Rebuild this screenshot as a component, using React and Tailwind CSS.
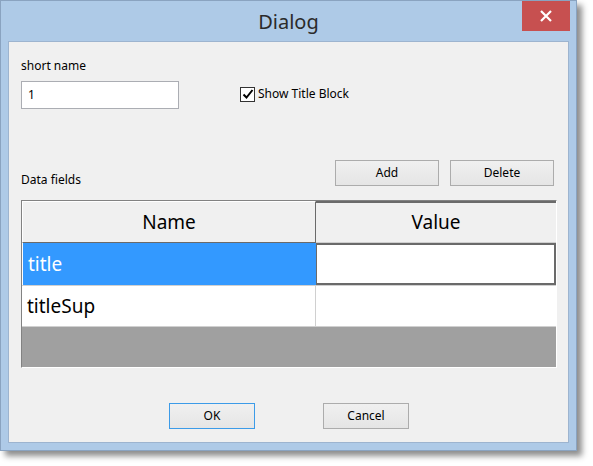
export default function App() {
  const f = { fontFamily: '"Noto Sans", "Open Sans", sans-serif' };
  return (
    <div className="w-[593px] h-[466px] bg-white" style={f}>
      <div className="w-[577px] h-[451px] bg-[#aecae7] border border-[#8aa3c0] flex flex-col shadow-[5px_5px_6px_rgba(0,0,0,0.45)]">
        <div className="h-[40px] flex relative">
          <div className="flex-1 flex items-center justify-center text-[20px] text-[#2b2b2b] pt-[2px]">Dialog</div>
          <div className="absolute right-[6px] top-0 w-[48px] h-[30px] bg-[#c75050] flex items-center justify-center">
            <svg width="14" height="14" viewBox="0 0 14 14"><path d="M2 2L12 12M12 2L2 12" stroke="white" strokeWidth="2.2" /></svg>
          </div>
        </div>
        <div className="mx-[7px] mb-[7px] flex-1 bg-[#f0f0f0] border border-[#9db4cf] flex flex-col px-[12px] text-[12px] text-black">
          <div className="mt-[15px] h-[16px]">short name</div>
          <div className="flex items-center mt-[8px]">
            <div className="w-[158px] h-[28px] bg-white border border-[#abadb3] pl-[6px] flex items-center">1</div>
            <div className="ml-[61px] flex items-center gap-[3px] -mt-[2px]">
              <div className="w-[15px] h-[15px] border border-[#333] bg-white flex items-center justify-center">
                <svg width="12" height="12" viewBox="0 0 12 12"><path d="M1.5 6.5L4.5 9.5L10.5 2" stroke="black" strokeWidth="2" fill="none" /></svg>
              </div>
              <span>Show Title Block</span>
            </div>
          </div>
          <div className="flex items-end mt-[51px]">
            <div className="flex-1 mb-[-3px]">Data fields</div>
            <div className="w-[104px] h-[26px] border border-[#acacac] bg-gradient-to-b from-[#f0f0f0] to-[#e5e5e5] flex items-center justify-center">Add</div>
            <div className="w-[104px] h-[26px] ml-[11px] mr-[2px] border border-[#acacac] bg-gradient-to-b from-[#f0f0f0] to-[#e5e5e5] flex items-center justify-center">Delete</div>
          </div>
          <div className="mt-[14px] w-[536px] h-[168px] border border-[#828282] border-r-[#fff] border-b-[#fff] bg-[#a0a0a0] flex flex-col text-[19px]">
            <div className="flex h-[42px] bg-[#f0f0f0] shrink-0">
              <div className="w-[294px] flex items-center justify-center border-r border-b border-[#6a6a6a] border-l border-l-white border-t border-t-white">Name</div>
              <div className="flex-1 flex items-center justify-center border-t-2 border-[#6a6a6a] border-b border-b-[#cfcfcf]">Value</div>
            </div>
            <div className="flex h-[42px] shrink-0">
              <div className="w-[294px] bg-[#3399ff] text-white flex items-center pl-[5px] border-l border-l-white">title</div>
              <div className="flex-1 bg-white border-2 border-[#6a6a6a] border-l-[1.5px]"></div>
            </div>
            <div className="flex h-[42px] shrink-0 bg-white border-t border-[#d0d0d0] border-b">
              <div className="w-[294px] flex items-center pl-[5px] border-r border-[#d0d0d0]">titleSup</div>
              <div className="flex-1"></div>
            </div>
          </div>
          <div className="flex mt-[35px] ml-[148px]">
            <div className="w-[86px] h-[26px] border border-[#3c9be8] bg-gradient-to-b from-[#f0f0f0] to-[#e5e5e5] flex items-center justify-center">OK</div>
            <div className="w-[86px] h-[26px] ml-[68px] border border-[#acacac] bg-gradient-to-b from-[#f0f0f0] to-[#e5e5e5] flex items-center justify-center">Cancel</div>
          </div>
        </div>
      </div>
    </div>
  );
}
